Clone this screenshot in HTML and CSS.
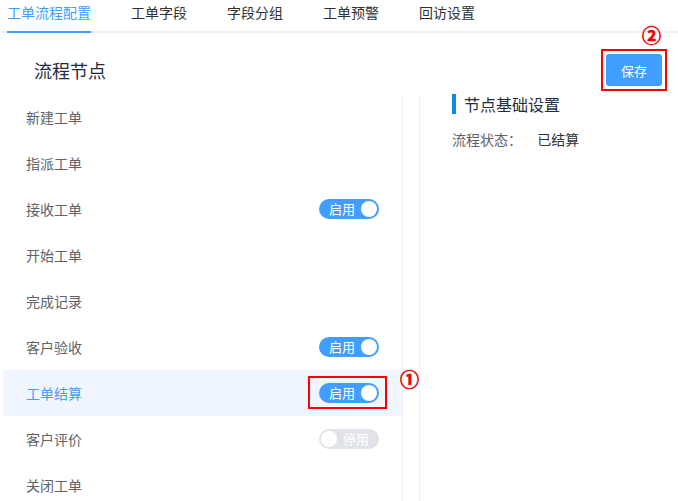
FILE: index.html
```html
<!DOCTYPE html>
<html lang="zh-CN">
<head>
  <meta charset="UTF-8">
  <title>工单流程配置</title>
  <link rel="stylesheet" href="styles.css">
</head>
<body>
  <div class="tabs">
    <span class="tab active">工单流程配置</span>
    <span class="tab">工单字段</span>
    <span class="tab">字段分组</span>
    <span class="tab">工单预警</span>
    <span class="tab">回访设置</span>
  </div>

  <div class="head">
    <h2 class="title">流程节点</h2>
    <span class="save-wrap">
      <button class="save">保存</button>
      <span class="num num-save">②</span>
    </span>
  </div>

  <div class="main">
    <ul class="nodes">
      <li class="node">新建工单</li>
      <li class="node">指派工单</li>
      <li class="node">接收工单 <span class="switch on"><span class="switch-text">启用</span><span class="dot"></span></span></li>
      <li class="node">开始工单</li>
      <li class="node">完成记录</li>
      <li class="node">客户验收 <span class="switch on"><span class="switch-text">启用</span><span class="dot"></span></span></li>
      <li class="node active">工单结算
        <span class="mark">
          <span class="switch on"><span class="switch-text">启用</span><span class="dot"></span></span>
          <span class="num num-switch">①</span>
        </span>
      </li>
      <li class="node">客户评价 <span class="switch off"><span class="dot"></span><span class="switch-text">停用</span></span></li>
      <li class="node">关闭工单</li>
    </ul>

    <div class="detail">
      <h3 class="detail-title">节点基础设置</h3>
      <div class="field">
        <span class="field-label">流程状态：</span>
        <span class="field-value">已结算</span>
      </div>
    </div>
  </div>
</body>
</html>
```

FILE: styles.css
```css
html, body {
  height: 100%;
}
body {
  margin: 0;
  overflow: hidden;
  font-family: "Noto Sans CJK SC", "Liberation Sans", sans-serif;
  color: #303133;
  background: #fff;
}

.tabs {
  display: flex;
  padding-left: 7px;
  border-bottom: 2px solid #eef0f4;
}
.tab {
  margin-right: 40px;
  font-size: 14px;
  line-height: 25px;
  padding-bottom: 6px;
  border-bottom: 2px solid transparent;
  margin-bottom: -2px;
  color: #303133;
}
.tab.active {
  color: #409eff;
  border-bottom-color: #409eff;
}

.head {
  display: flex;
  justify-content: space-between;
  align-items: center;
  padding: 21px 16px 8px 34px;
}
.title {
  margin: 0;
  font-size: 18px;
  font-weight: normal;
  line-height: 24px;
  color: #1f2d3d;
}
.save-wrap {
  position: relative;
  display: flex;
}
.save-wrap::after {
  content: "";
  position: absolute;
  left: -5px;
  right: -5px;
  top: -5px;
  bottom: -5px;
  border: 2px solid #f00;
}
.save {
  width: 56px;
  height: 32px;
  padding: 0;
  border: 0;
  border-radius: 3px;
  background: #409eff;
  color: #fff;
  font-family: inherit;
  font-size: 13px;
}

.num {
  position: absolute;
  color: #e00;
  font-size: 19px;
  font-weight: bold;
  line-height: 18px;
  font-family: "DejaVu Serif", "Noto Sans CJK SC", serif;
  -webkit-text-stroke: 0.6px #e00;
}
.num-save {
  left: 36px;
  top: -27px;
}
.num-switch {
  left: 81px;
  top: -12px;
}

.main {
  display: flex;
  height: 407px;
}
.nodes {
  list-style: none;
  margin: 0 0 0 3px;
  padding: 0;
  width: 399px;
  border-right: 1px solid #eef0f4;
}
.node {
  display: flex;
  justify-content: space-between;
  align-items: center;
  height: 46px;
  padding: 0 23px;
  font-size: 14px;
  color: #606266;
}
.node.active {
  background: #eff6ff;
  color: #409eff;
}

.switch {
  display: flex;
  align-items: center;
  justify-content: space-between;
  box-sizing: border-box;
  width: 60px;
  height: 20px;
  padding: 0 2px 0 10px;
  border-radius: 10px;
  background: #409eff;
  color: #fff;
  font-size: 13px;
}
.switch .dot {
  width: 16px;
  height: 16px;
  border-radius: 50%;
  background: #fff;
}
.switch.off {
  padding: 0 10px 0 2px;
  background: #dcdfe6;
  opacity: 0.85;
}
.switch-text {
  line-height: 20px;
}

.mark {
  position: relative;
}
.mark::after {
  content: "";
  position: absolute;
  left: -11px;
  right: -8px;
  top: -7px;
  bottom: -6px;
  border: 2px solid #f00;
}

.detail {
  margin-left: 16px;
  padding-left: 32px;
  border-left: 1px solid #eef0f4;
  flex: 1;
}
.detail-title {
  margin: 0;
  padding-left: 8px;
  border-left: 4px solid #0a8fe8;
  font-size: 16px;
  font-weight: normal;
  line-height: 20px;
  color: #1f2d3d;
}
.field {
  margin-top: 15px;
  font-size: 14px;
  line-height: 20px;
}
.field-label {
  display: inline-block;
  width: 82px;
  color: #606266;
}
.field-value {
  color: #303133;
}
```
